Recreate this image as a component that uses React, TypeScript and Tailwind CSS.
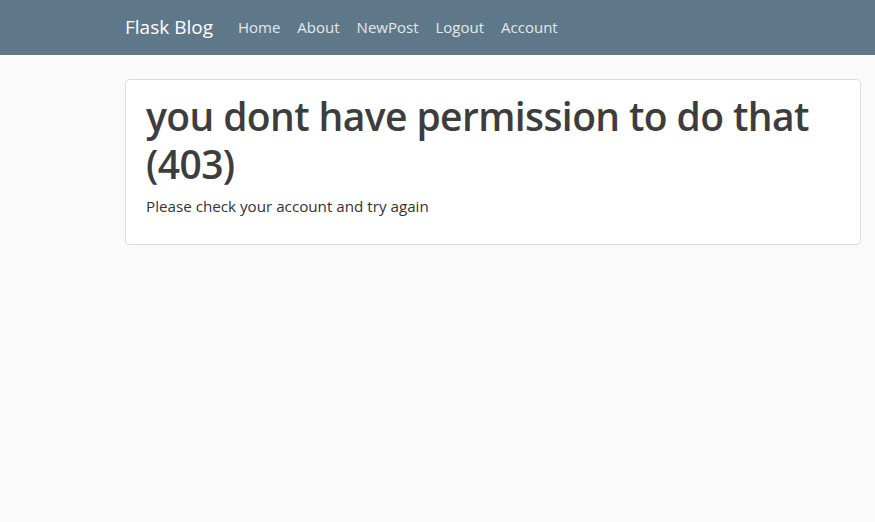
import React from "react";

const links = ["Home", "About", "NewPost", "Logout", "Account"];

export default function App() {
  return (
    <div className="min-h-[522px] bg-[#fafafa] font-['Open_Sans',sans-serif] text-[#444444]">
      <nav className="h-[55px] bg-[#5f7889] flex items-center pl-[125px]">
        <a className="text-[19px] text-white mr-[25px]" href="#">
          Flask Blog
        </a>
        <div className="flex gap-[17px]">
          {links.map((l) => (
            <a key={l} className="text-[15px] text-[#e4e8eb]" href="#">
              {l}
            </a>
          ))}
        </div>
      </nav>
      <main className="pl-[125px] pr-[14px] pt-6">
        <div className="bg-white border border-[#dddddd] rounded-[4px] px-5 pt-[12px] pb-[26px]">
          <h1 className="text-[39px] leading-[48px] font-semibold tracking-[-0.6px] text-[#3d3d3d]">
            you dont have permission to do that (403)
          </h1>
          <p className="text-[15.2px] leading-6 mt-[6px] text-[#333333]">Please check your account and try again</p>
        </div>
      </main>
    </div>
  );
}
